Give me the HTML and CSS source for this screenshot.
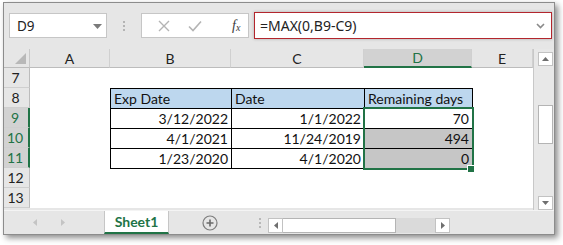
FILE: index.html
```html
<!DOCTYPE html>
<html>
<head>
<meta charset="utf-8">
<link rel="stylesheet" href="styles.css">
</head>
<body>
<div class="win">
  <div class="toolbar">
    <div class="namebox">
      <span class="nb-text">D9</span>
      <svg class="nb-arrow" width="9" height="5" viewBox="0 0 9 5"><path d="M0 0H9L4.5 5Z" fill="#7a7a7a"/></svg>
    </div>
    <div class="dots"><i></i><i></i><i></i></div>
    <div class="fxbox">
      <svg class="ico" width="12" height="12" viewBox="0 0 12 12"><path d="M1 1L11 11M11 1L1 11" stroke="#b4b4b4" stroke-width="1.4" fill="none"/></svg>
      <svg class="ico" width="14" height="12" viewBox="0 0 14 12"><path d="M1 6.5L5 10.5L13 1.5" stroke="#b4b4b4" stroke-width="1.6" fill="none"/></svg>
      <span class="fx">f<sub>x</sub></span>
    </div>
    <div class="formula">
      <span class="f-text">=MAX(0,B9-C9)</span>
      <svg class="f-chev" width="9" height="6" viewBox="0 0 9 6"><path d="M1 1L4.5 4.5L8 1" stroke="#8a8a8a" stroke-width="1.6" fill="none"/></svg>
    </div>
  </div>

  <div class="sheetarea">
    <div class="grid">
      <div class="corner"><span class="tri"></span></div>
      <div class="ch">A</div>
      <div class="ch">B</div>
      <div class="ch">C</div>
      <div class="ch ch-sel">D</div>
      <div class="ch">E</div>

      <div class="rh">7</div>
      <div class="c"></div><div class="c"></div><div class="c"></div><div class="c"></div><div class="c"></div>

      <div class="rh">8</div>
      <div class="c"></div>
      <div class="c t hd">Exp Date</div>
      <div class="c t hd">Date</div>
      <div class="c t hd">Remaining days</div>
      <div class="c tl"></div>

      <div class="rh rh-sel">9</div>
      <div class="c"></div>
      <div class="c t num">3/12/2022</div>
      <div class="c t num">1/1/2022</div>
      <div class="c t num">70</div>
      <div class="c tl"></div>

      <div class="rh rh-sel">10</div>
      <div class="c"></div>
      <div class="c t num">4/1/2021</div>
      <div class="c t num">11/24/2019</div>
      <div class="c t num shade">494</div>
      <div class="c tl"></div>

      <div class="rh rh-sel">11</div>
      <div class="c"></div>
      <div class="c t num">1/23/2020</div>
      <div class="c t num">4/1/2020</div>
      <div class="c t num shade">0</div>
      <div class="c tl"></div>

      <div class="rh">12</div>
      <div class="c"></div><div class="c tt"></div><div class="c tt"></div><div class="c tt"></div><div class="c"></div>

      <div class="rh">13</div>
      <div class="c"></div><div class="c"></div><div class="c"></div><div class="c"></div><div class="c"></div>

      <div class="selbox"></div>
      <div class="handle"></div>
    </div>
    <div class="vscroll">
      <div class="sbtn up"><svg width="7" height="4" viewBox="0 0 7 4"><path d="M0 4H7L3.5 0Z" fill="#6f6f6f"/></svg></div>
      <div class="vthumb"></div>
      <div class="vspace"></div>
      <div class="sbtn down"><svg width="7" height="4" viewBox="0 0 7 4"><path d="M0 0H7L3.5 4Z" fill="#6f6f6f"/></svg></div>
    </div>
  </div>

  <div class="tabbar">
    <div class="navs">
      <svg width="4" height="7" viewBox="0 0 4 7"><path d="M4 0V7L0 3.5Z" fill="#c4c4c4"/></svg>
      <svg width="4" height="7" viewBox="0 0 4 7"><path d="M0 0V7L4 3.5Z" fill="#c4c4c4"/></svg>
    </div>
    <div class="tab">Sheet1</div>
    <div class="addsheet">
      <svg width="16" height="16" viewBox="0 0 16 16"><circle cx="8" cy="8" r="7" stroke="#7d7d7d" stroke-width="1.2" fill="none"/><path d="M8 4.5V11.5M4.5 8H11.5" stroke="#6a6a6a" stroke-width="1.6"/></svg>
    </div>
    <div class="hdots"><i></i><i></i><i></i></div>
    <div class="hscroll">
      <div class="hbtn"><svg width="4" height="7" viewBox="0 0 4 7"><path d="M4 0V7L0 3.5Z" fill="#6f6f6f"/></svg></div>
      <div class="hthumb"></div>
      <div class="htrack"></div>
      <div class="hbtn"><svg width="4" height="7" viewBox="0 0 4 7"><path d="M0 0V7L4 3.5Z" fill="#6f6f6f"/></svg></div>
    </div>
  </div>
</div>
</body>
</html>
```

FILE: styles.css
```css
* { box-sizing: border-box; }
html, body { margin: 0; padding: 0; background: #fff; }
body { width: 563px; height: 245px; overflow: hidden; }

.win {
  margin: 2px 0 0 3px;
  width: 552px;
  height: 233px;
  border: 1px solid #8c8c8c;
  background: #e6e6e6;
  box-shadow: 3px 3px 6px rgba(0,0,0,0.45);
  display: flex;
  flex-direction: column;
}

/* ---------- toolbar ---------- */
.toolbar {
  height: 46px;
  display: flex;
  align-items: flex-start;
  padding: 10px 0 0 5px;
  font-family: "Noto Sans", sans-serif;
}
.namebox {
  width: 98px;
  height: 25px;
  background: #fff;
  border: 1px solid #c6c6c6;
  display: flex;
  align-items: center;
  justify-content: space-between;
  padding: 0 4px 0 7px;
  font-size: 13.5px;
  color: #222;
}
.nb-arrow { margin-top: 1px; }
.dots {
  width: 34px;
  height: 25px;
  display: flex;
  flex-direction: column;
  align-items: center;
  justify-content: center;
  gap: 2px;
}
.dots i { display: block; width: 2px; height: 2px; background: #b4b4b4; }
.fxbox {
  width: 108px;
  height: 25px;
  background: #fff;
  border: 1px solid #c6c6c6;
  display: flex;
  align-items: center;
  padding: 0 0 0 16px;
  gap: 18px;
}
.fx {
  font-family: "Liberation Serif", serif;
  font-style: italic;
  font-size: 14px;
  color: #3a3a3a;
  margin-left: 12px;
}
.fx sub { font-size: 10px; vertical-align: baseline; position: relative; top: 1px; }
.formula {
  margin: -1px 0 0 5px;
  width: 298px;
  height: 27px;
  background: #fff;
  border: 1px solid #b3262d;
  box-shadow: 0 0 3px rgba(0,0,0,0.25);
  display: flex;
  align-items: center;
  justify-content: space-between;
  padding: 0 6px 0 5px;
  font-size: 14px;
  color: #222;
}

/* ---------- sheet ---------- */
.sheetarea {
  height: 161px;
  display: flex;
}
.grid {
  position: relative;
  display: grid;
  grid-template-columns: 26px 80px 121px 133px 108px 61px;
  grid-template-rows: 19px repeat(7, 20px);
  background: #fff;
  align-self: flex-start;
  font-family: "Lato", sans-serif;
  font-size: 14px;
  color: #111;
}
.corner {
  background: #e6e6e6;
  border-right: 1px solid #c8c8c8;
  border-bottom: 1px solid #bcbcbc;
  position: relative;
}
.tri {
  position: absolute;
  right: 3px;
  bottom: 3px;
  width: 0; height: 0;
  border-left: 11px solid transparent;
  border-bottom: 11px solid #b8b8b8;
}
.ch {
  background: #e6e6e6;
  border-right: 1px solid #d0d0d0;
  border-bottom: 1px solid #bcbcbc;
  display: flex;
  align-items: center;
  justify-content: center;
  font-size: 14px;
  color: #222;
}
.ch-sel {
  background: #d2d2d2;
  color: #217346;
  border-bottom: 2px solid #217346;
}
.rh {
  background: #e6e6e6;
  border-right: 1px solid #bcbcbc;
  border-bottom: 1px solid #cfcfcf;
  display: flex;
  align-items: center;
  justify-content: center;
  font-size: 14px;
  color: #222;
  padding-right: 2px;
}
.rh-sel {
  background: #d2d2d2;
  color: #217346;
  border-right: 2px solid #217346;
}
.c {
  background: #fff;
  line-height: 20px;
  padding: 0 3px;
  white-space: nowrap;
  overflow: hidden;
}
.t { border-left: 1px solid #000; border-top: 1px solid #000; line-height: 19px; }
.tl { border-left: 1px solid #000; }
.tt { border-top: 1px solid #000; }
.hd { background: #bdd7ee; }
.num { text-align: right; }
.shade { background: #c6c6c6; }

.selbox {
  position: absolute;
  left: 359px;
  top: 58px;
  width: 111px;
  height: 63px;
  border: 2px solid #217346;
  pointer-events: none;
}
.handle {
  position: absolute;
  left: 464px;
  top: 117px;
  width: 6px;
  height: 6px;
  background: #217346;
  border: 1px solid #fff;
  box-sizing: content-box;
  margin: -1px 0 0 -1px;
}

.vscroll {
  flex: 1;
  border-left: 1px solid #c8c8c8;
  background: #e8e8e8;
  display: flex;
  flex-direction: column;
  padding: 3px 0 0 4px;
}
.sbtn {
  width: 15px;
  height: 14px;
  background: #fff;
  border: 1px solid #c2c2c2;
  display: flex;
  align-items: center;
  justify-content: center;
}
.vthumb {
  margin-top: 39px;
  width: 15px;
  height: 39px;
  background: #fff;
  border: 1px solid #b4b4b4;
}
.vspace { flex: 1; }

/* ---------- tab bar ---------- */
.tabbar {
  flex: 1;
  display: flex;
  align-items: stretch;
  border-top: 1px solid #f4f4f4;
  font-family: "Lato", sans-serif;
}
.navs {
  width: 100px;
  display: flex;
  align-items: center;
  padding-left: 29px;
  gap: 24px;
}
.tab {
  width: 65px;
  background: #fff;
  border-left: 1px solid #c6c6c6;
  border-right: 1px solid #c6c6c6;
  border-bottom: 2px solid #217346;
  display: flex;
  align-items: center;
  justify-content: center;
  font-weight: bold;
  font-size: 14px;
  color: #217346;
}
.addsheet {
  width: 82px;
  display: flex;
  align-items: center;
  padding-left: 33px;
}
.hdots {
  width: 17px;
  display: flex;
  flex-direction: column;
  align-items: center;
  justify-content: center;
  gap: 2px;
}
.hdots i { display: block; width: 2px; height: 2px; background: #b8b8b8; }
.hscroll {
  width: 182px;
  margin-top: 7px;
  height: 15px;
  display: flex;
}
.hbtn {
  width: 15px;
  height: 15px;
  background: #fff;
  border: 1px solid #c2c2c2;
  display: flex;
  align-items: center;
  justify-content: center;
}
.hthumb {
  width: 113px;
  height: 15px;
  background: #fff;
  border: 1px solid #b4b4b4;
  border-left: none;
}
.htrack {
  flex: 1;
  background: #dadada;
}
```
